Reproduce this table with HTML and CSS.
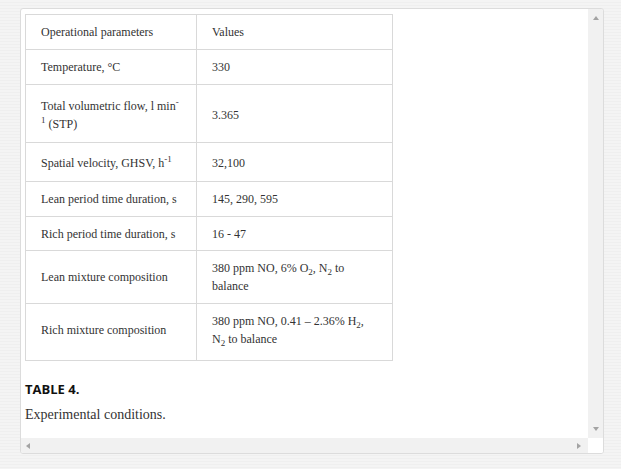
FILE: index.html
```html
<!DOCTYPE html>
<html>
<head>
<meta charset="utf-8">
<link rel="stylesheet" href="styles.css">
</head>
<body>
<div class="panel">
  <div class="content">
    <table class="data">
      <tr><td class="c1">Operational parameters</td><td class="c2">Values</td></tr>
      <tr><td class="c1">Temperature, °C</td><td class="c2">330</td></tr>
      <tr class="sup2"><td class="c1">Total volumetric flow, l min<sup>-1</sup> (STP)</td><td class="c2">3.365</td></tr>
      <tr class="sup1"><td class="c1">Spatial velocity, GHSV, h<sup>-1</sup></td><td class="c2">32,100</td></tr>
      <tr><td class="c1">Lean period time duration, s</td><td class="c2">145, 290, 595</td></tr>
      <tr class="tight"><td class="c1">Rich period time duration, s</td><td class="c2">16 - 47</td></tr>
      <tr><td class="c1">Lean mixture composition</td><td class="c2">380 ppm NO, 6% O<sub>2</sub>, N<sub>2</sub> to balance</td></tr>
      <tr class="extra"><td class="c1">Rich mixture composition</td><td class="c2">380 ppm NO, 0.41 – 2.36% H<sub>2</sub>, N<sub>2</sub> to balance</td></tr>
    </table>
    <div class="label">TABLE 4.</div>
    <div class="caption">Experimental conditions.</div>
  </div>
  <div class="vbar"><span class="arr up"></span><span class="arr down"></span></div>
  <div class="hbar"><span class="arr left"></span><span class="arr right"></span></div>
  <div class="corner"></div>
</div>
</body>
</html>
```
FILE: styles.css
```css
html, body {
  margin: 0;
  padding: 0;
}
body {
  background: #f2f2f2;
  background-image: repeating-linear-gradient(180deg, #f4f4f4 0, #f4f4f4 2px, #efefef 2px, #efefef 3px);
  padding: 8px 17px 0 20px;
  height: 469px;
  box-sizing: border-box;
  font-family: "Liberation Serif", "Times New Roman", serif;
}
.panel {
  background: #fff;
  border: 1px solid #dcdcdc;
  border-radius: 3px;
  height: 446px;
  box-sizing: border-box;
  display: grid;
  grid-template-columns: 1fr 15px;
  grid-template-rows: 1fr 15px;
  overflow: hidden;
}
.content {
  padding: 5px 4px 0 4px;
  overflow: hidden;
}
.data {
  border-collapse: collapse;
  width: 368px;
  font-size: 12px;
  line-height: 18px;
  color: #333;
}
.data td {
  border: 1px solid #d9d9d9;
  padding: 8px 15px;
  vertical-align: middle;
}
.c1 { width: 140px; }
.data sup { font-size: 9px; line-height: 0; }
.data sub { font-size: 9px; line-height: 0; }
.sup2 td { padding-top: 12px; padding-bottom: 9px; }
.sup1 td { padding-top: 11px; padding-bottom: 9px; }
.tight td { padding-bottom: 7px; }
.extra td { padding-bottom: 12px; }
.label {
  font-family: "Open Sans", sans-serif;
  font-weight: 700;
  font-size: 13px;
  color: #111;
  margin-top: 20px;
  line-height: 16px;
}
.caption {
  font-size: 14px;
  color: #333;
  margin-top: 9px;
  line-height: 18px;
}
.vbar {
  background: #f1f1f1;
  display: flex;
  flex-direction: column;
  justify-content: space-between;
  align-items: center;
  padding: 7px 0;
}
.hbar {
  background: #f1f1f1;
  display: flex;
  justify-content: space-between;
  align-items: center;
  padding: 0 7px 0 5px;
}
.corner { background: #fff; }
.arr { display: block; width: 0; height: 0; }
.up { border-left: 3.5px solid transparent; border-right: 3.5px solid transparent; border-bottom: 4px solid #a3a3a3; }
.down { border-left: 3.5px solid transparent; border-right: 3.5px solid transparent; border-top: 4px solid #a3a3a3; }
.left { border-top: 3.5px solid transparent; border-bottom: 3.5px solid transparent; border-right: 4px solid #a3a3a3; }
.right { border-top: 3.5px solid transparent; border-bottom: 3.5px solid transparent; border-left: 4px solid #a3a3a3; }
```
